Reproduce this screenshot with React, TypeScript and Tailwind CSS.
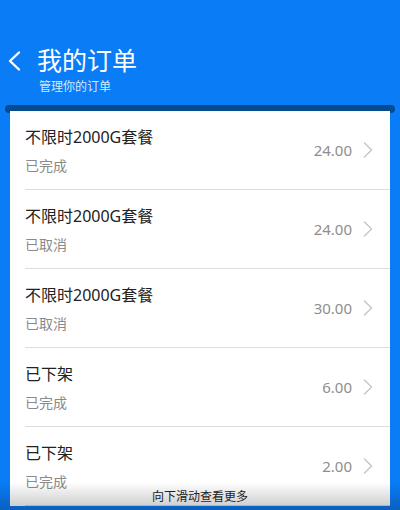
import { ChevronRight } from 'lucide-react';

const orders = [
  { name: '不限时2000G套餐', status: '已完成', price: '24.00' },
  { name: '不限时2000G套餐', status: '已取消', price: '24.00' },
  { name: '不限时2000G套餐', status: '已取消', price: '30.00' },
  { name: '已下架', status: '已完成', price: '6.00' },
  { name: '已下架', status: '已完成', price: '2.00' },
];

export default function App() {
  return (
    <div
      className="relative w-[400px] h-[510px] overflow-hidden bg-[#0a7cf6]"
      style={{ fontFamily: '"Noto Sans", "Noto Sans CJK SC", sans-serif' }}
    >
      {/* header */}
      <div className="pt-[43px] pl-[7px]">
        <div className="flex items-center h-[34px]">
          <svg width="14" height="22" viewBox="0 0 14 22" fill="none" className="mt-[1px]">
            <polyline points="12,2.5 3,11 12,19.5" stroke="white" strokeWidth="2.4" strokeLinecap="round" strokeLinejoin="round" />
          </svg>
          <h1 className="ml-[16px] text-[25px] leading-[34px] text-white">我的订单</h1>
        </div>
        <p className="ml-[32px] mt-[2px] text-[12px] leading-[16px] text-[#d6e8ff]">管理你的订单</p>
      </div>

      {/* slot */}
      <div className="mt-[10px] mx-[5px] h-[8px] rounded-full bg-[#064a8f]" />

      {/* list */}
      <div className="-mt-[2px] mx-[10px] bg-white">
        {orders.map((o, i) => (
          <div key={i} className="ml-[15px] h-[79px] flex items-center border-b border-[#dddddd]">
            <div className="flex-1 pt-[1px]">
              <div className="text-[16px] leading-[22px] text-[#222]">{o.name}</div>
              <div className="mt-[8px] text-[14px] leading-[20px] text-[#8a8a8a]">{o.status}</div>
            </div>
            <span className="text-[15px] text-[#8e8e8e]">{o.price}</span>
            <ChevronRight className="ml-[2px] mr-[8px] w-[28px] h-[28px] text-[#c8c8c8]" strokeWidth={1.3} />
          </div>
        ))}
      </div>

      {/* scroll hint */}
      <div className="absolute left-0 right-0 bottom-0 h-[28px] bg-gradient-to-b from-[rgba(0,0,0,0)] to-[rgba(0,0,0,0.22)] flex items-end justify-center pb-[5px]">
        <span className="text-[12px] leading-[16px] text-[#222]">向下滑动查看更多</span>
      </div>
    </div>
  );
}
